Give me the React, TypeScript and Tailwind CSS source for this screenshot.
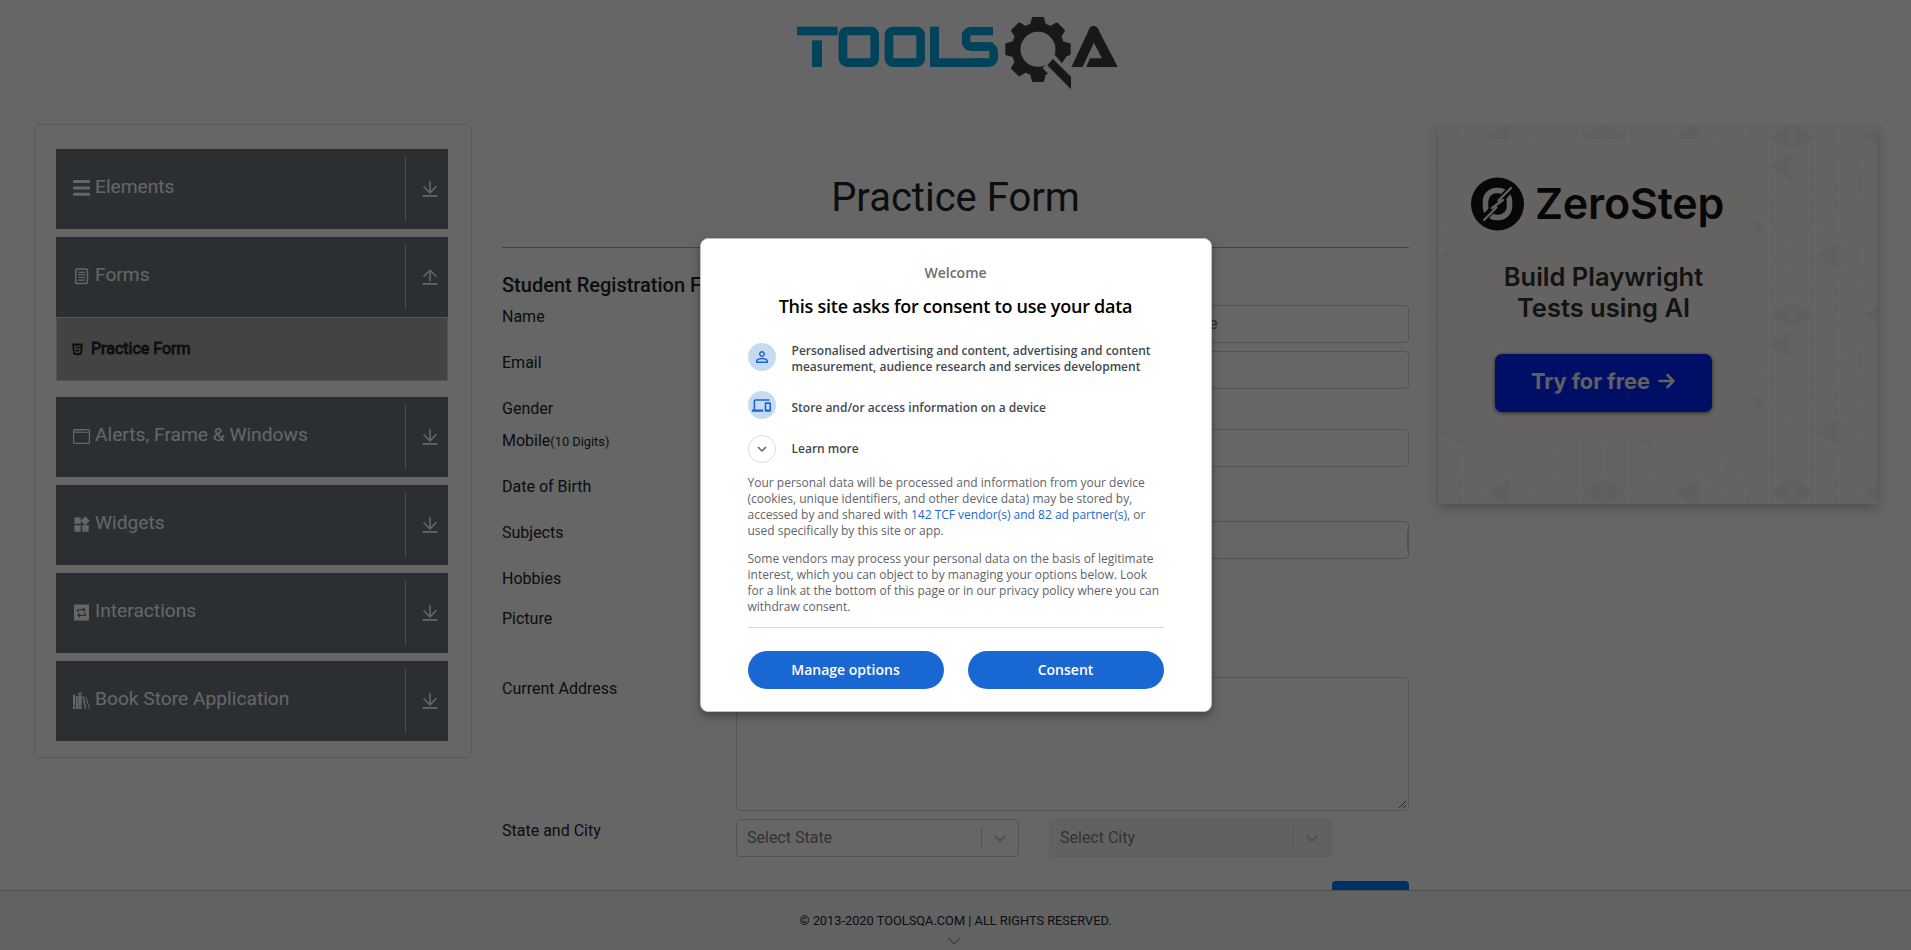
import React from "react";
import { MdWidgets } from "react-icons/md";
import { AiFillHtml5 } from "react-icons/ai";

function Logo() {
  return (
    <svg width="321" height="73" viewBox="51 51 963 219" className="block">
      <g fill="#00a9e4">
        <rect x="51" y="80" width="122" height="26" />
        <rect x="96" y="121" width="30" height="80" />
        <rect x="450" y="80" width="27" height="121" />
        <rect x="450" y="175" width="160" height="26" />
      </g>
      <g fill="none" stroke="#00a9e4" strokeWidth="26">
        <rect x="189" y="93" width="95" height="95" rx="12" />
        <rect x="327" y="93" width="95" height="95" rx="12" />
        <svg x="545" y="80" width="94" height="73">
          <rect x="13" y="13" width="200" height="47" rx="15" />
        </svg>
        <svg x="570" y="127" width="84" height="74">
          <rect x="-100" y="13" width="171" height="48" rx="15" />
        </svg>
      </g>
      <g fill="#3d3d3d" stroke="#3d3d3d" strokeWidth="6" strokeLinejoin="round">
        {[0, 45, 90, 135, 180, 225, 270, 315].map((a) => (
          <polygon key={a} points="753,75 759,53 789,53 795,75" transform={`rotate(${a} 774 148)`} />
        ))}
      </g>
      <circle cx="774" cy="148" r="66" fill="none" stroke="#3d3d3d" strokeWidth="27" />
      <polygon points="824,164 880,220 830,250 788,204" fill="#fff" />
      <polygon points="828,168 846,190 860,168 840,150" fill="#3d3d3d" />
      <polygon points="819,177 873,230 873,268 802,196" fill="#3d3d3d" />
      <svg x="870" y="70" width="146" height="131" viewBox="870 70 146 131">
        <g stroke="#3d3d3d" strokeWidth="30">
          <line x1="885" y1="214" x2="941" y2="94" />
          <line x1="941" y1="94" x2="1002" y2="212" />
        </g>
        <circle cx="941" cy="93" r="15" fill="#3d3d3d" />
        <rect x="1008" y="175" width="72" height="26" fill="#3d3d3d" transform="skewX(-24)" />
      </svg>
    </svg>
  );
}

function ArrowIcon({ up }: { up?: boolean }) {
  return (
    <svg width="16" height="18" viewBox="0 0 16 18" fill="none" stroke="#fff" strokeWidth="1.5" strokeLinecap="round">
      <path d={up ? "M8 2.2V12.8M1.9 8.3L8 2.2l6.1 6.1" : "M8 1.5V12.8M1.9 6.8L8 12.9l6.1-6.1"} />
      <path d="M1.3 15.9h13.4" strokeWidth="1.9" />
    </svg>
  );
}

function BarsIcon() {
  return (
    <svg width="17" height="17" viewBox="0 0 17 17" fill="#fff">
      <rect y="0" width="17" height="3" rx="1" />
      <rect y="6.4" width="17" height="3" rx="1" />
      <rect y="12.8" width="17" height="3" rx="1" />
    </svg>
  );
}

function BooksIcon() {
  return (
    <svg width="17" height="17" viewBox="0 0 17 17" fill="#fff">
      <path d="M0 2.500h2.200V17H0zM2.900 4h1.900v13H2.900zM5.300 0.800h3.300V17H5.300z" />
      <path d="M9.300 4.600l1.500-.4L13.400 16.600l-1.500.4zM12.300 5.200l.9-.4L17.200 16.500l-.9.4z" />
      <path d="M0 13.500h2.200M5.300 14.200h3.300M5.300 3h3.300" stroke="#6c757d" strokeWidth="0.7" />
    </svg>
  );
}

function FormsIcon() {
  return (
    <svg width="17" height="17" viewBox="0 0 17 17" fill="none" stroke="#fff">
      <rect x="2.7" y="1" width="11.8" height="14.6" rx="1.8" strokeWidth="1.5" />
      <path d="M5.200 4.300h7M5.200 6.900h7M5.200 9.500h7M5.200 12.100h7" strokeWidth="1.200" />
    </svg>
  );
}

function WindowIcon() {
  return (
    <svg width="17" height="17" viewBox="0 0 17 17" fill="none" stroke="#fff">
      <rect x="0.6" y="1.6" width="15.8" height="13.8" rx="0.8" strokeWidth="1.2" />
      <path d="M1 4.300h15" strokeWidth="1" />
      <path d="M1 2.900h8" strokeWidth="1" strokeDasharray="1.6 0.9" />
    </svg>
  );
}

function RepeatIcon() {
  return (
    <svg width="17" height="17" viewBox="0 0 17 17">
      <rect x="1" y="0.5" width="15" height="16" fill="#fff" />
      <g stroke="#6c757d" fill="none" strokeWidth="1.3">
        <path d="M4.800 8.300V5.700h6M12.200 8.500v2.800h-6" />
      </g>
      <path d="M10 3.300l3 2.400-3 2.400zM7 8.900l-3 2.400 3 2.400z" fill="#6c757d" />
    </svg>
  );
}

function SideItem({ icon, label, up }: { icon: React.ReactNode; label: string; up?: boolean }) {
  return (
    <div className="flex h-20 items-center bg-[#6c757d] pl-[17px] text-white">
      <span className="mt-[-2px] flex w-[17px] justify-center">{icon}</span>
      <span className="mt-[-4px] ml-[5px] flex-1 text-[19.2px] leading-[24px]">{label}</span>
      <span className="flex h-16 w-[43px] items-center justify-center border-l border-[#b9bec3] pl-[6px]">
        <ArrowIcon up={up} />
      </span>
    </div>
  );
}

const columnX = (c: number) => c * 23.5 + 0.5;
const leftTri = (c: number, y: number) => `${columnX(c)},${y - 14.8} ${columnX(c)},${y + 14.8} ${columnX(c - 1)},${y}`;
const rightTri = (c: number, y: number) => `${columnX(c)},${y - 14.8} ${columnX(c)},${y + 14.8} ${columnX(c + 1)},${y}`;

function AdPattern() {
  const lines: string[] = [];
  for (let c = 0; c < 8; c++) {
    lines.push(`M${columnX(c)} 0V178`);
    for (let r = -1; r < 8; r++) {
      const y = r * 29.67 + (c % 2 === 0 ? 12.7 : -2.1);
      const d = 14.8;
      lines.push(`M${columnX(c)} ${y}l23.5 ${d}M${columnX(c)} ${y}l23.5 ${-d}`);
    }
  }
  return (
    <svg className="absolute inset-0 h-full w-full">
      <defs>
        <pattern id="tri" width="188" height="178" patternUnits="userSpaceOnUse">
          <rect width="188" height="178" fill="#f8f8f8" />
          <g fill="#ededed">
            <polygon points={leftTri(7, 12.7)} />
            <polygon points={rightTri(7, 12.7)} />
            <polygon points={leftTri(7, 42)} />
            <polygon points={leftTri(3, 12.7)} />
          </g>
          <g fill="#f1f1f1">
            <polygon points={leftTri(1, 131)} />
            <polygon points={rightTri(5, 102)} />
          </g>
          <g fill="#f5f5f5">
            <polygon points={rightTri(1, 131)} />
            <polygon points={leftTri(2, 57)} />
            <polygon points={rightTri(3, 12.7)} />
            <polygon points={leftTri(5, 161)} />
            <polygon points={rightTri(4, 86)} />
            <polygon points={leftTri(7, 131)} />
          </g>
          <path d={lines.join("")} stroke="#fdfdfd" strokeWidth="0.7" fill="none" />
        </pattern>
      </defs>
      <rect width="100%" height="100%" fill="url(#tri)" />
    </svg>
  );
}

function Ad() {
  return (
    <aside className="relative ml-[30px] h-[380px] w-[438px] shadow-[0_4px_12px_rgba(0,0,0,0.25)]">
      <AdPattern />
      <div className="relative ml-[14px] pt-[15px]">
        <div className="flex h-[300px] w-[300px] flex-col items-center bg-[#fbf8f3] font-['Inter',sans-serif]">
          <div className="mt-[38px] flex items-center self-start pl-[18px]">
            <svg width="53" height="54" viewBox="0 0 53 54">
              <circle cx="26.5" cy="27" r="26.5" fill="#131313" />
              <rect x="14.5" y="13.5" width="24" height="27" rx="11" fill="none" stroke="#fbf8f3" strokeWidth="5.5" />
              <path d="M11 44L42 9" stroke="#131313" strokeWidth="7" />
              <path d="M13 43L25.5 30.5M27.500 23.500L40 11M21 31l11-8" stroke="#fbf8f3" strokeWidth="2.200" strokeLinecap="round" />
            </svg>
            <span className="mt-[-2px] ml-[11px] text-[43px] leading-[52px] font-semibold tracking-[-0.2px] text-[#131313]">ZeroStep</span>
          </div>
          <div className="mt-[30px] pl-px text-center text-[25.500px] leading-[31px] font-semibold text-[#303030]">
            Build Playwright
            <br />
            Tests using AI
          </div>
          <div className="mt-[31px] flex h-[58px] w-[217px] items-center justify-center rounded-[7px] bg-[#0026ff] pb-1 text-[21.700px] font-bold text-[#f0f0f0] shadow-[0_1px_4px_rgba(0,0,0,0.6)]">
            Try for free
            <svg width="17" height="16" viewBox="0 0 17 16" className="ml-2" fill="none" stroke="#f0f0f0" strokeWidth="2.500" strokeLinecap="round" strokeLinejoin="round">
              <path d="M1.500 8h14M9.500 2l6 6-6 6" />
            </svg>
          </div>
        </div>
      </div>
    </aside>
  );
}

function Row({ label, className, children }: { label: React.ReactNode; className: string; children?: React.ReactNode }) {
  return (
    <div className={`flex shrink-0 ${className}`}>
      <div className="w-[234px] leading-6">{label}</div>
      {children}
    </div>
  );
}

function Chevron() {
  return (
    <svg width="20" height="20" viewBox="0 0 20 20" fill="#ccc">
      <path d="M4.516 7.548c0.436-0.446 1.043-0.481 1.576 0l3.908 3.747 3.908-3.747c0.533-0.481 1.141-0.446 1.574 0 0.436 0.445 0.408 1.197 0 1.615-0.406 0.418-4.695 4.502-4.695 4.502-0.217 0.223-0.502 0.335-0.787 0.335s-0.570-0.112-0.789-0.335c0 0-4.287-4.084-4.695-4.502s-0.436-1.170 0-1.615z" />
    </svg>
  );
}

function Select({ label, className, line }: { label: string; className: string; line: string }) {
  return (
    <div className={`flex h-[38px] items-center rounded border pl-[10px] text-[#808080] ${className}`}>
      <span className="flex-1">{label}</span>
      <span className={`h-5 w-px ${line}`} />
      <span className="px-2">
        <Chevron />
      </span>
    </div>
  );
}

function ConsentDialog() {
  return (
    <div className="absolute inset-0 flex justify-center bg-black/60 font-['Open_Sans',sans-serif]">
      <div className="mt-[238px] flex h-[474px] w-[512px] flex-col rounded-lg border border-[#bdc1c6] bg-white px-[47px] shadow-[0_4px_10px_rgba(0,0,0,0.35)]">
        <div className="mt-[24px] text-center text-[14px] leading-[20px] font-semibold text-[#6a6e73]">Welcome</div>
        <div className="mt-[11px] text-center text-[18px] leading-[24px] font-semibold tracking-[-0.25px] text-black">This site asks for consent to use your data</div>
        <div className="mt-[25px] flex h-7">
          <span className="flex h-7 w-7 items-center justify-center rounded-full bg-[#c6daf4]">
            <svg width="18" height="18" viewBox="0 0 24 24" fill="#1967d2">
              <path d="M12 5.900a2.100 2.100 0 1 1 0 4.200 2.100 2.100 0 0 1 0-4.200m0 9c2.970 0 6.100 1.460 6.100 2.100v1.100H5.900V17c0-.640 3.130-2.100 6.100-2.100M12 4C9.790 4 8 5.790 8 8s1.790 4 4 4 4-1.790 4-4-1.790-4-4-4zm0 9c-2.670 0-8 1.340-8 4v3h16v-3c0-2.660-5.330-4-8-4z" />
            </svg>
          </span>
          <span className="ml-[16px] text-[12px] leading-4 font-semibold whitespace-nowrap text-[#45494d]">
            Personalised advertising and content, advertising and content
            <br />
            measurement, audience research and services development
          </span>
        </div>
        <div className="mt-[20px] flex h-7">
          <span className="flex h-7 w-7 items-center justify-center rounded-full bg-[#c6daf4]">
            <svg width="19" height="19" viewBox="0 0 24 24" fill="#1967d2">
              <path d="M4 6h18V4H4c-1.100 0-2 .9-2 2v11H0v3h14v-3H4V6zm19 2h-6c-.550 0-1 .450-1 1v10c0 .550.450 1 1 1h6c.550 0 1-.450 1-1V9c0-.550-.450-1-1-1zm-1 9h-4v-7h4v7z" />
            </svg>
          </span>
          <span className="mt-[9px] ml-[16px] text-[12px] leading-4 font-semibold text-[#45494d]">Store and/or access information on a device</span>
        </div>
        <div className="mt-[16px] flex h-7 items-center">
          <span className="flex h-7 w-7 items-center justify-center rounded-full border border-[#dadce0]">
            <svg width="18" height="18" viewBox="0 0 24 24" fill="#5f6368">
              <path d="M16.590 8.590L12 13.170 7.410 8.590 6 10l6 6 6-6z" />
            </svg>
          </span>
          <span className="ml-[16px] text-[12px] leading-4 font-semibold text-[#45494d]">Learn more</span>
        </div>
        <p className="mt-[12px] text-[12px] leading-4 whitespace-nowrap text-[#5f6368]">
          Your personal data will be processed and information from your device
          <br />
          (cookies, unique identifiers, and other device data) may be stored by,
          <br />
          accessed by and shared with <span className="text-[#1967d2]">142 TCF vendor(s) and 82 ad partner(s)</span>, or
          <br />
          used specifically by this site or app.
        </p>
        <p className="mt-[12px] text-[12px] leading-4 whitespace-nowrap text-[#5f6368]">
          Some vendors may process your personal data on the basis of legitimate
          <br />
          interest, which you can object to by managing your options below. Look
          <br />
          for a link at the bottom of this page or in our privacy policy where you can
          <br />
          withdraw consent.
        </p>
        <div className="mt-[12px] h-px shrink-0 bg-[#dadce0]" />
        <div className="mt-[23px] flex gap-6">
          <button className="h-[38px] flex-1 rounded-[19px] bg-[#1967d2] pb-px text-[14px] font-semibold text-white">Manage options</button>
          <button className="h-[38px] flex-1 rounded-[19px] bg-[#1967d2] pb-px text-[14px] font-semibold text-white">Consent</button>
        </div>
      </div>
    </div>
  );
}

export default function App() {
  return (
    <div className="relative flex h-[950px] w-[1911px] flex-col overflow-hidden bg-white font-['Roboto',sans-serif] text-[16px] text-[#212529]">
      <header className="flex h-[124px] shrink-0 pt-[17px] pl-[797px]">
        <Logo />
      </header>

      <div className="flex min-h-0 flex-1 items-start overflow-y-clip pl-[34px]">
        <nav className="h-[634px] w-[438px] rounded-[5px] border border-[#dee2e6] pt-6 pr-[23px] pl-[21px]">
          <div className="flex flex-col gap-2">
            <SideItem icon={<BarsIcon />} label="Elements" />
            <div>
              <SideItem icon={<FormsIcon />} label="Forms" up />
              <div className="mb-2 flex h-16 items-center border border-[#d0d5da] bg-[#a9a9a9] pl-[13px]">
                <AiFillHtml5 size={15} />
                <span className="ml-[6px] text-[16px] [-webkit-text-stroke:0.9px_#212529]">Practice Form</span>
              </div>
            </div>
            <SideItem icon={<WindowIcon />} label="Alerts, Frame & Windows" />
            <SideItem icon={<MdWidgets size={19} className="shrink-0" />} label="Widgets" />
            <SideItem icon={<RepeatIcon />} label="Interactions" />
            <SideItem icon={<BooksIcon />} label="Book Store Application" />
          </div>
        </nav>

        <main className="ml-[30px] flex h-[826px] w-[907px] flex-col">
          <h1 className="mt-[50px] text-center text-[40px] leading-[48px] font-normal">Practice Form</h1>
          <hr className="mt-[25px] h-px shrink-0 border-0 bg-[#a8a8a8]" />
          <h5 className="mt-[25px] text-[20px] leading-6 font-medium">Student Registration Form</h5>
          <Row label="Name" className="mt-2 h-[46px]">
            <div className="ml-[391px] flex h-[38px] flex-1 items-center rounded border border-[#ced4da] pl-3 text-[#6c757d]">Last Name</div>
          </Row>
          <Row label="Email" className="h-[46px]">
            <div className="h-[38px] flex-1 rounded border border-[#ced4da]" />
          </Row>
          <Row label="Gender" className="h-8" />
          <Row
            label={
              <>
                Mobile<span className="text-[12.800px]">(10 Digits)</span>
              </>
            }
            className="h-[46px]"
          >
            <div className="h-[38px] flex-1 rounded border border-[#ced4da]" />
          </Row>
          <Row label="Date of Birth" className="h-[46px]" />
          <Row label="Subjects" className="h-[46px]">
            <div className="flex h-[38px] flex-1 items-center justify-end rounded border border-[#ccc]">
              <span className="h-5 w-px bg-[#ccc]" />
            </div>
          </Row>
          <Row label="Hobbies" className="h-10" />
          <Row label="Picture" className="h-[70px]" />
          <Row label="Current Address" className="h-[142px]">
            <div className="flex h-[134px] flex-1 items-end justify-end rounded border border-[#ced4da] p-px">
              <svg width="9" height="9" viewBox="0 0 9 9" stroke="#555" strokeWidth="0.9">
                <path d="M1 8L8 1M5 8L8 5" />
              </svg>
            </div>
          </Row>
          <Row label="State and City" className="h-[62px]">
            <Select label="Select State" className="w-[283px] border-[#ccc]" line="bg-[#ccc]" />
            <Select label="Select City" className="ml-[30px] w-[282px] border-[#e6e6e6] bg-[#f2f2f2]" line="bg-[#e6e6e6]" />
          </Row>
          <div className="h-[38px] w-[77px] shrink-0 self-end rounded bg-[#007bff]" />
        </main>

        <Ad />
      </div>

      <footer className="relative flex h-[60px] shrink-0 flex-col items-center border-t border-[#c8c8c8] bg-[#f5f5f5]">
        <span className="mt-[20px] text-[12.800px] leading-5">© 2013-2020 TOOLSQA.COM | ALL RIGHTS RESERVED.</span>
        <svg width="14" height="8" viewBox="0 0 14 8" className="mt-[6px] mr-[3px]" fill="none" stroke="#8a8a8a" strokeWidth="1.100">
          <path d="M1 .8l6 6 6-6" />
        </svg>
      </footer>

      <ConsentDialog />
    </div>
  );
}
